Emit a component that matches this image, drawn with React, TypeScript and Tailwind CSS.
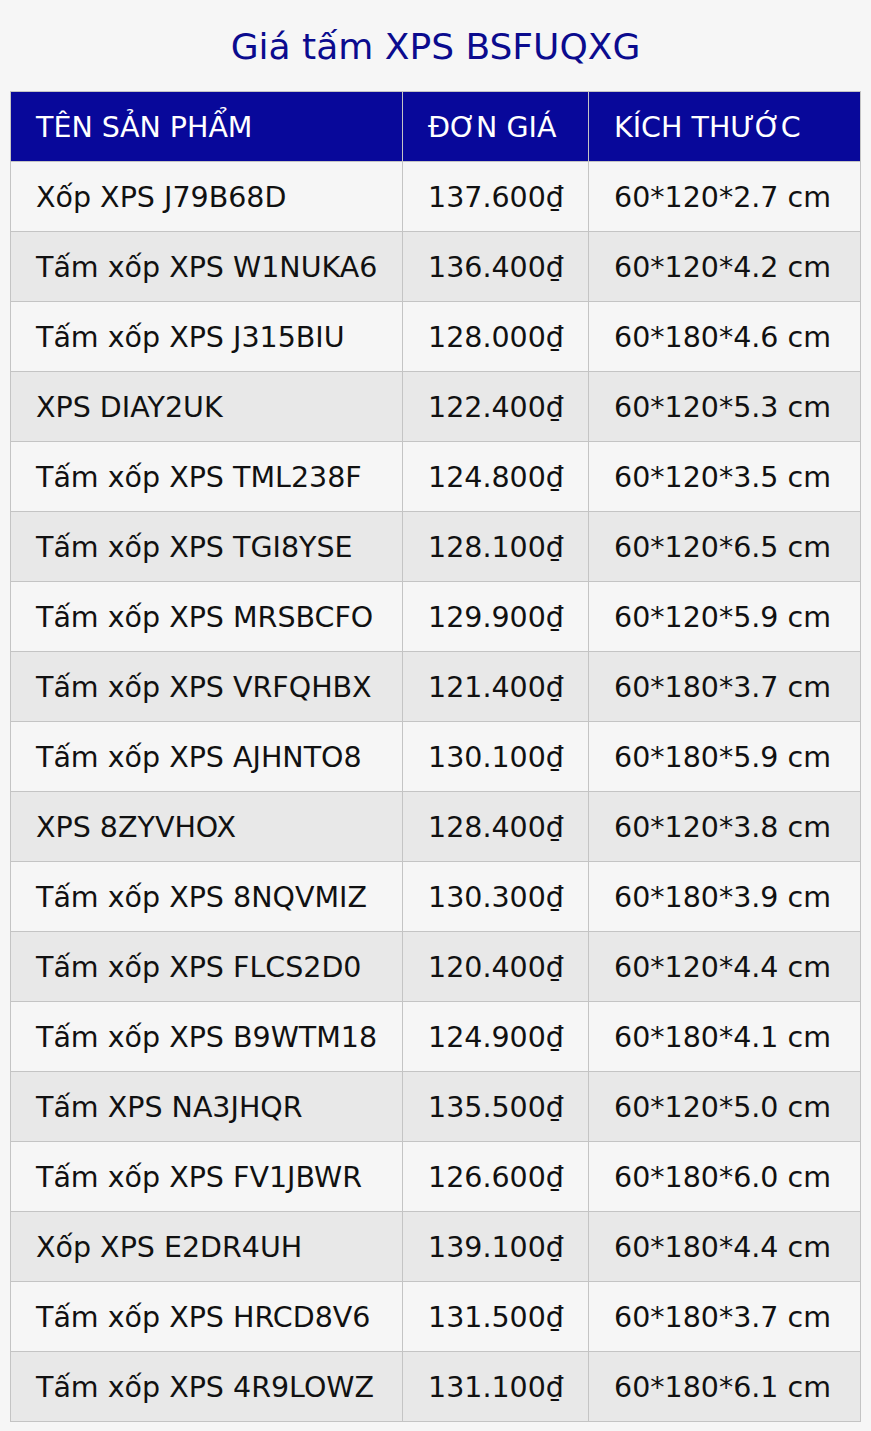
const ROWS: [string, string, string][] = [
  ["Xốp XPS J79B68D", "137.600₫", "60*120*2.7 cm"],
  ["Tấm xốp XPS W1NUKA6", "136.400₫", "60*120*4.2 cm"],
  ["Tấm xốp XPS J315BIU", "128.000₫", "60*180*4.6 cm"],
  ["XPS DIAY2UK", "122.400₫", "60*120*5.3 cm"],
  ["Tấm xốp XPS TML238F", "124.800₫", "60*120*3.5 cm"],
  ["Tấm xốp XPS TGI8YSE", "128.100₫", "60*120*6.5 cm"],
  ["Tấm xốp XPS MRSBCFO", "129.900₫", "60*120*5.9 cm"],
  ["Tấm xốp XPS VRFQHBX", "121.400₫", "60*180*3.7 cm"],
  ["Tấm xốp XPS AJHNTO8", "130.100₫", "60*180*5.9 cm"],
  ["XPS 8ZYVHOX", "128.400₫", "60*120*3.8 cm"],
  ["Tấm xốp XPS 8NQVMIZ", "130.300₫", "60*180*3.9 cm"],
  ["Tấm xốp XPS FLCS2D0", "120.400₫", "60*120*4.4 cm"],
  ["Tấm xốp XPS B9WTM18", "124.900₫", "60*180*4.1 cm"],
  ["Tấm XPS NA3JHQR", "135.500₫", "60*120*5.0 cm"],
  ["Tấm xốp XPS FV1JBWR", "126.600₫", "60*180*6.0 cm"],
  ["Xốp XPS E2DR4UH", "139.100₫", "60*180*4.4 cm"],
  ["Tấm xốp XPS HRCD8V6", "131.500₫", "60*180*3.7 cm"],
  ["Tấm xốp XPS 4R9LOWZ", "131.100₫", "60*180*6.1 cm"],
];

export default function App() {
  return (
    <div className="min-h-[1431px] bg-[#f6f6f6] px-[10px] pb-[10px] font-['DejaVu_Sans',sans-serif]">
      <h1 className="pt-[26px] pb-[23px] text-center text-[36px] leading-[42px] text-[#0b0b8e]">
        Giá tấm XPS BSFUQXG
      </h1>
      <table className="w-[850px] table-fixed border-collapse text-[28.5px] leading-[32px]">
        <colgroup>
          <col className="w-[392px]" />
          <col className="w-[186px]" />
          <col className="w-[272px]" />
        </colgroup>
        <thead>
          <tr className="h-[70px] bg-[#08089a] text-white">
            <th className="border border-[#c4c4c4] pl-[25px] pt-[2px] text-left font-normal whitespace-nowrap">TÊN SẢN PHẨM</th>
            <th className="border border-[#c4c4c4] pl-[25px] pt-[2px] text-left font-normal whitespace-nowrap">ĐƠN GIÁ</th>
            <th className="border border-[#c4c4c4] pl-[25px] pt-[2px] text-left font-normal whitespace-nowrap">KÍCH THƯỚC</th>
          </tr>
        </thead>
        <tbody>
          {ROWS.map((r, i) => (
            <tr key={i} className={`h-[70px] text-[#111] ${i % 2 ? "bg-[#e8e8e8]" : "bg-[#f6f6f6]"}`}>
              <td className="border border-[#c4c4c4] pl-[25px] pt-[2px] whitespace-nowrap">{r[0]}</td>
              <td className="border border-[#c4c4c4] pl-[25px] pt-[2px] whitespace-nowrap">{r[1]}</td>
              <td className="border border-[#c4c4c4] pl-[25px] pt-[2px] whitespace-nowrap">{r[2]}</td>
            </tr>
          ))}
        </tbody>
      </table>
    </div>
  );
}
